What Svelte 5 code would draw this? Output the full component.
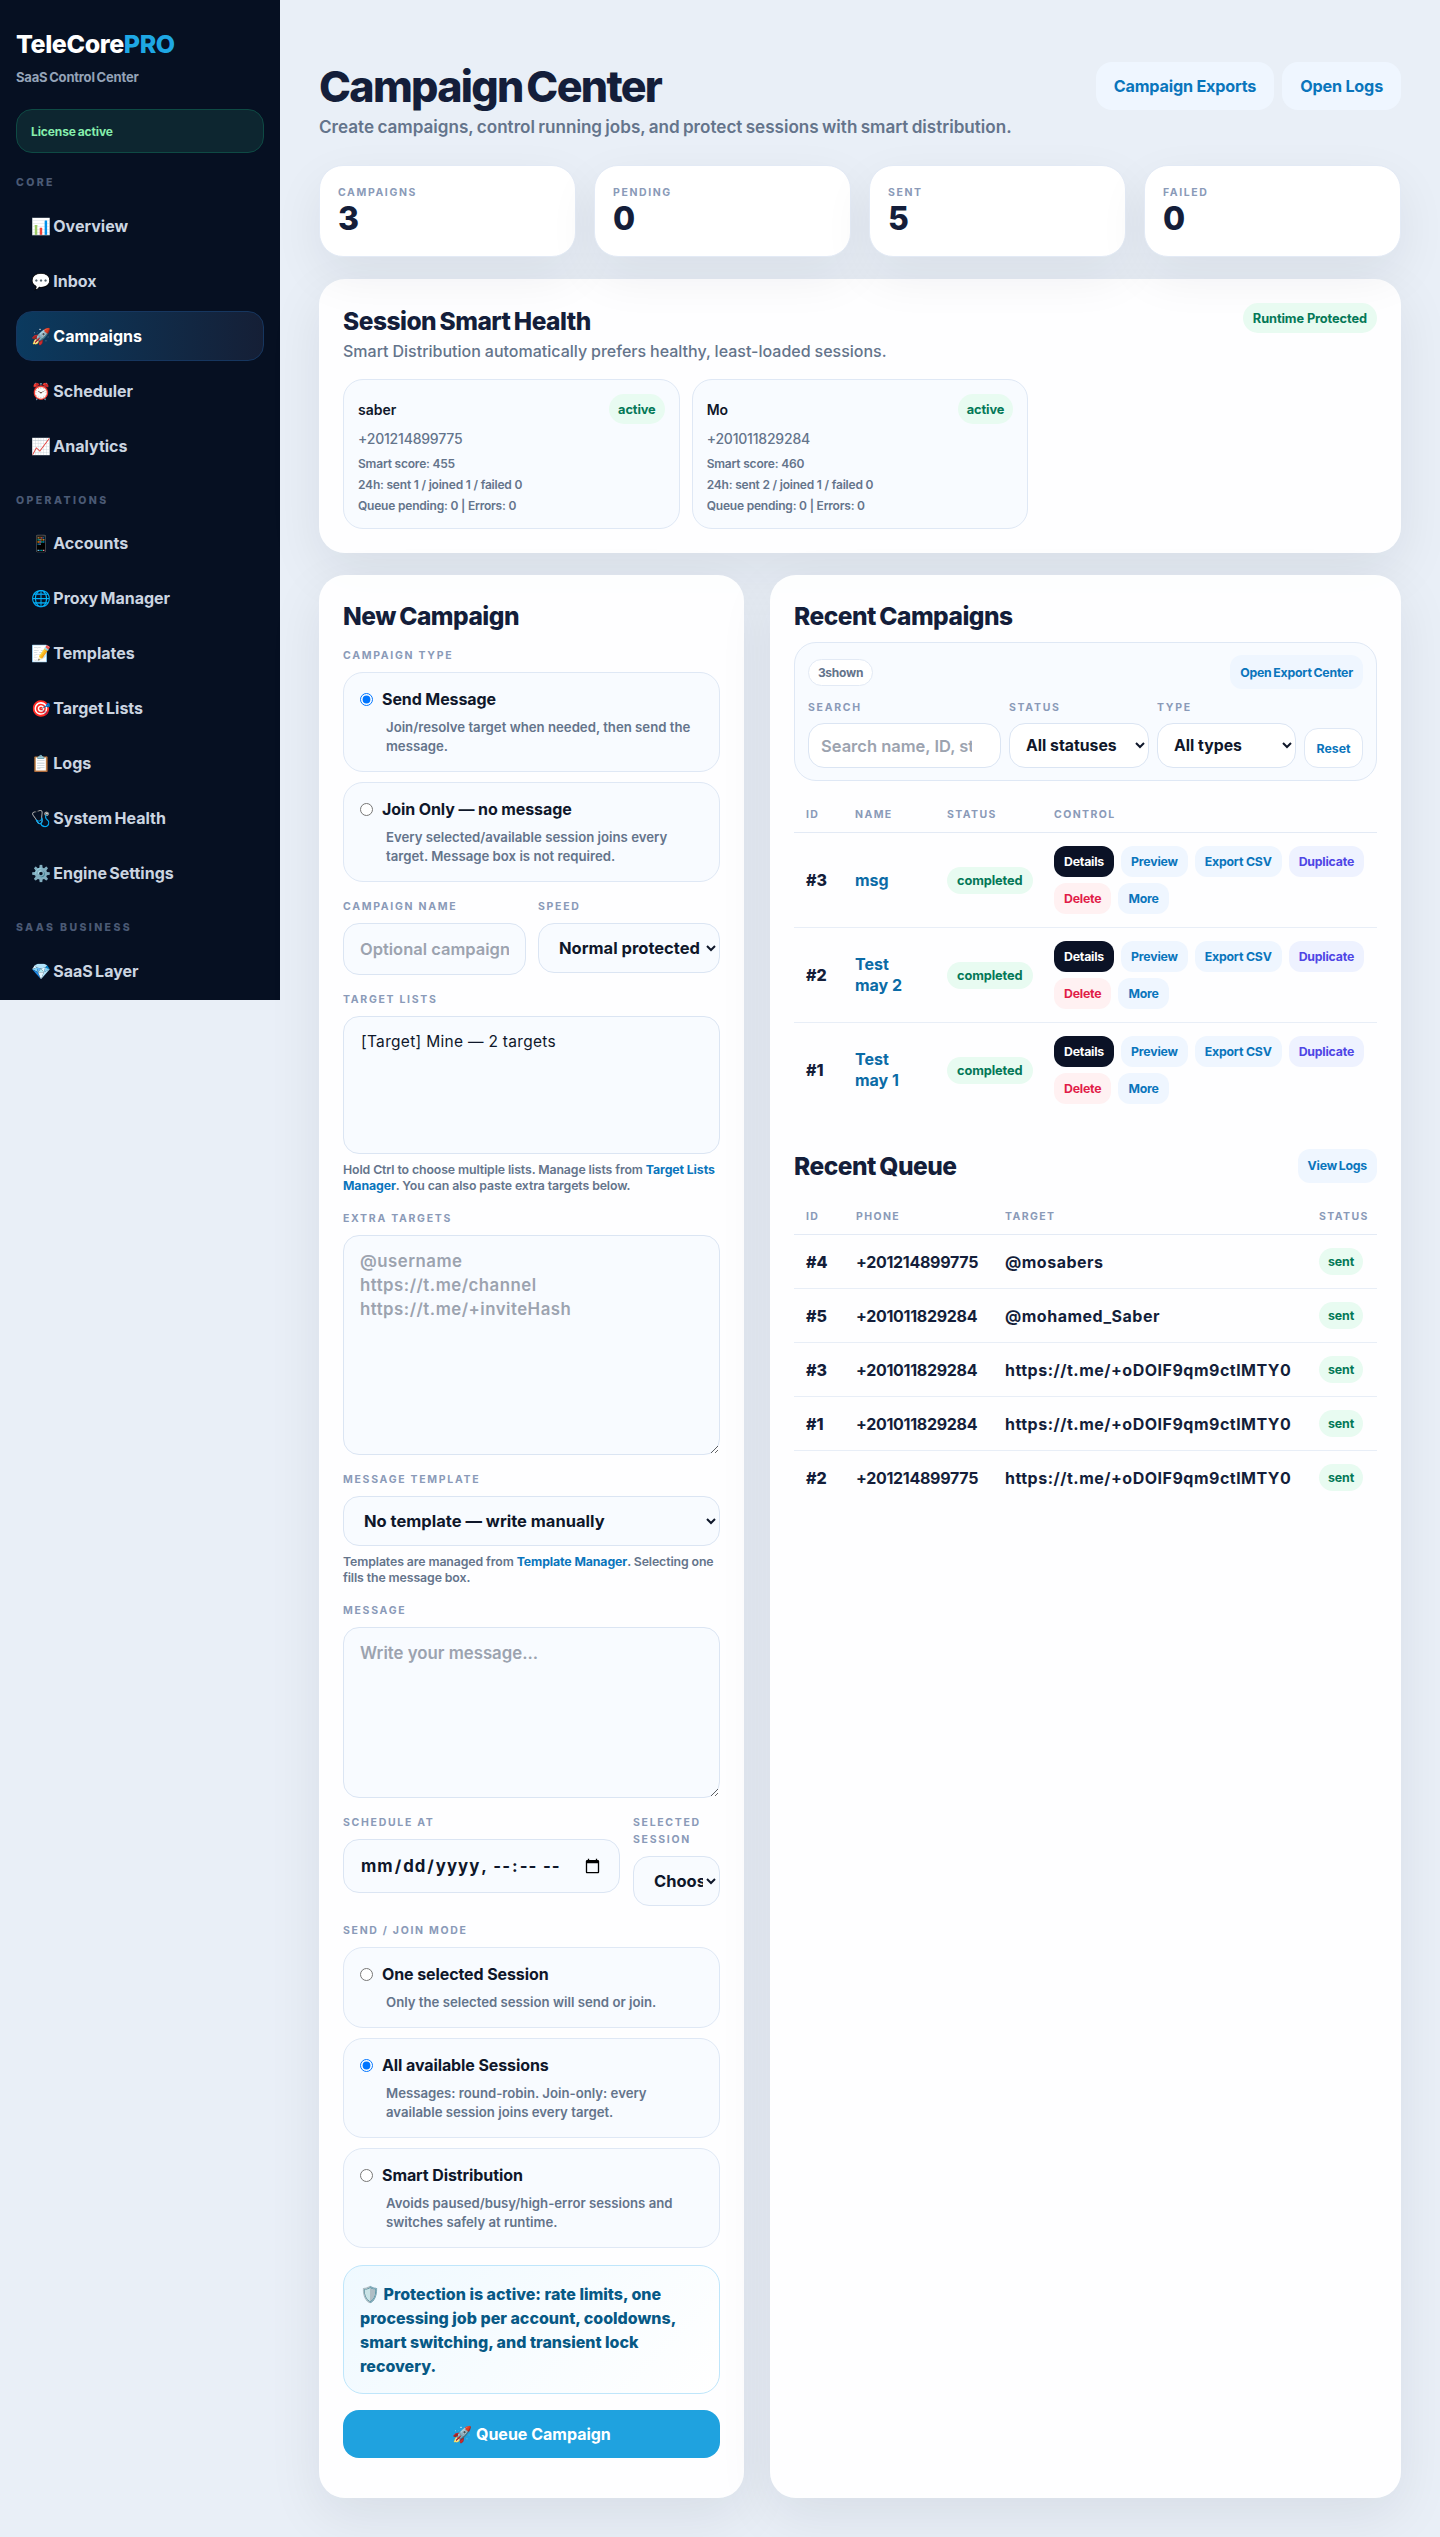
<script>
  const nav = [
    { title: 'Core', items: [
      { icon: '📊', label: 'Overview' },
      { icon: '💬', label: 'Inbox' },
      { icon: '🚀', label: 'Campaigns', active: true },
      { icon: '⏰', label: 'Scheduler' },
      { icon: '📈', label: 'Analytics' }
    ] },
    { title: 'Operations', items: [
      { icon: '📱', label: 'Accounts' },
      { icon: '🌐', label: 'Proxy Manager' },
      { icon: '📝', label: 'Templates' },
      { icon: '🎯', label: 'Target Lists' },
      { icon: '📋', label: 'Logs' },
      { icon: '🩺', label: 'System Health' },
      { icon: '⚙️', label: 'Engine Settings' }
    ] },
    { title: 'SaaS Business', items: [{ icon: '💎', label: 'SaaS Layer' }] }
  ];

  const stats = [
    { label: 'Campaigns', value: 3 },
    { label: 'Pending', value: 0 },
    { label: 'Sent', value: 5 },
    { label: 'Failed', value: 0 }
  ];

  const sessions = [
    { name: 'saber', phone: '+201214899775', score: 455, day: '24h: sent 1 / joined 1 / failed 0' },
    { name: 'Mo', phone: '+201011829284', score: 460, day: '24h: sent 2 / joined 1 / failed 0' }
  ];

  const campaigns = [
    { id: 3, name: 'msg' },
    { id: 2, name: 'Test may 2' },
    { id: 1, name: 'Test may 1' }
  ];

  const queue = [
    { id: 4, phone: '+201214899775', target: '@mosabers' },
    { id: 5, phone: '+201011829284', target: '@mohamed_Saber' },
    { id: 3, phone: '+201011829284', target: 'https://t.me/+oDOIF9qm9ctlMTY0' },
    { id: 1, phone: '+201011829284', target: 'https://t.me/+oDOIF9qm9ctlMTY0' },
    { id: 2, phone: '+201214899775', target: 'https://t.me/+oDOIF9qm9ctlMTY0' }
  ];

  const modes = [
    { title: 'One selected Session', desc: 'Only the selected session will send or join.' },
    { title: 'All available Sessions', desc: 'Messages: round-robin. Join-only: every available session joins every target.', checked: true },
    { title: 'Smart Distribution', desc: 'Avoids paused/busy/high-error sessions and switches safely at runtime.' }
  ];
</script>

<div class="shell">
  <aside class="sidebar">
    <div class="brand">TeleCore<span>PRO</span></div>
    <div class="brand-sub">SaaS Control Center</div>
    <div class="license">License active</div>
    {#each nav as group}
      <div class="nav-title">{group.title}</div>
      {#each group.items as item}
        <a class="nav-link" class:active={item.active} href="#top">{item.icon} {item.label}</a>
      {/each}
    {/each}
  </aside>

  <main class="main">
    <header class="top">
      <div>
        <h1>Campaign Center</h1>
        <p class="lead">Create campaigns, control running jobs, and protect sessions with smart distribution.</p>
      </div>
      <div class="top-actions">
        <button class="soft big">Campaign Exports</button>
        <button class="soft big">Open Logs</button>
      </div>
    </header>

    <section class="stats">
      {#each stats as s}
        <div class="stat">
          <div class="stat-label">{s.label}</div>
          <div class="stat-value">{s.value}</div>
        </div>
      {/each}
    </section>

    <section class="card health">
      <div class="health-head">
        <div>
          <h2>Session Smart Health</h2>
          <p class="health-sub">Smart Distribution automatically prefers healthy, least-loaded sessions.</p>
        </div>
        <span class="pill">Runtime Protected</span>
      </div>
      <div class="health-grid">
        {#each sessions as s}
          <div class="session">
            <div class="session-head">
              <strong>{s.name}</strong>
              <span class="pill">active</span>
            </div>
            <div class="session-phone">{s.phone}</div>
            <div class="session-line">Smart score: {s.score}</div>
            <div class="session-line">{s.day}</div>
            <div class="session-line">Queue pending: 0 | Errors: 0</div>
          </div>
        {/each}
      </div>
    </section>

    <div class="columns">
      <section class="card form">
        <h2>New Campaign</h2>

        <div class="field">
          <span class="label">Campaign type</span>
          <div class="options">
            <label class="option">
              <span class="option-title"><input type="radio" name="ctype" checked />Send Message</span>
              <span class="option-desc">Join/resolve target when needed, then send the message.</span>
            </label>
            <label class="option">
              <span class="option-title"><input type="radio" name="ctype" />Join Only — no message</span>
              <span class="option-desc">Every selected/available session joins every target. Message box is not required.</span>
            </label>
          </div>
        </div>

        <div class="row-name">
          <div class="field">
            <span class="label">Campaign name</span>
            <input class="control" type="text" placeholder="Optional campaign name" />
          </div>
          <div class="field">
            <span class="label">Speed</span>
            <select class="control"><option>Normal protected</option></select>
          </div>
        </div>

        <div class="field">
          <span class="label">Target lists</span>
          <select class="control lists" multiple><option>[Target] Mine — 2 targets</option></select>
          <p class="hint">Hold Ctrl to choose multiple lists. Manage lists from <a href="#top">Target Lists Manager</a>. You can also paste extra targets below.</p>
        </div>

        <div class="field">
          <span class="label">Extra targets</span>
          <textarea class="control extra" placeholder={'@username\nhttps://t.me/channel\nhttps://t.me/+inviteHash'}></textarea>
        </div>

        <div class="field">
          <span class="label">Message template</span>
          <select class="control"><option>No template — write manually</option></select>
          <p class="hint">Templates are managed from <a href="#top">Template Manager</a>. Selecting one fills the message box.</p>
        </div>

        <div class="field">
          <span class="label">Message</span>
          <textarea class="control message" placeholder="Write your message..."></textarea>
        </div>

        <div class="row-schedule">
          <div class="field">
            <span class="label">Schedule at</span>
            <input class="control date" type="datetime-local" />
          </div>
          <div class="field">
            <span class="label">Selected session</span>
            <select class="control"><option>Choose session</option></select>
          </div>
        </div>

        <div class="field">
          <span class="label">Send / Join mode</span>
          <div class="options">
            {#each modes as m}
              <label class="option">
                <span class="option-title"><input type="radio" name="mode" checked={m.checked} />{m.title}</span>
                <span class="option-desc">{m.desc}</span>
              </label>
            {/each}
          </div>
        </div>

        <div class="protect">🛡️ Protection is active: rate limits, one processing job per account, cooldowns, smart switching, and transient lock recovery.</div>
        <button class="queue-btn">🚀 Queue Campaign</button>
      </section>

      <section class="card recent">
        <h2>Recent Campaigns</h2>
        <div class="filters">
          <div class="filters-top">
            <span class="chip">3 shown</span>
            <button class="soft small">Open Export Center</button>
          </div>
          <div class="filters-grid">
            <div>
              <span class="label tight">Search</span>
              <input class="filter-control search" type="text" placeholder="Search name, ID, status" />
            </div>
            <div>
              <span class="label tight">Status</span>
              <select class="filter-control"><option>All statuses</option></select>
            </div>
            <div>
              <span class="label tight">Type</span>
              <select class="filter-control"><option>All types</option></select>
            </div>
            <button class="reset">Reset</button>
          </div>
        </div>

        <table class="campaigns">
          <colgroup><col class="c-id" /><col class="c-name" /><col class="c-status" /><col /></colgroup>
          <thead><tr><th>ID</th><th>Name</th><th>Status</th><th>Control</th></tr></thead>
          <tbody>
            {#each campaigns as c}
              <tr>
                <td class="id">#{c.id}</td>
                <td><a class="name" href="#top">{c.name}</a></td>
                <td><span class="pill">completed</span></td>
                <td>
                  <div class="actions">
                    <button class="act dark">Details</button>
                    <button class="act">Preview</button>
                    <button class="act">Export CSV</button>
                    <button class="act violet">Duplicate</button>
                    <button class="act danger">Delete</button>
                    <button class="act">More</button>
                  </div>
                </td>
              </tr>
            {/each}
          </tbody>
        </table>

        <div class="queue-head">
          <h2>Recent Queue</h2>
          <button class="soft small">View Logs</button>
        </div>

        <table class="queue">
          <colgroup><col class="q-id" /><col class="q-phone" /><col /><col class="q-status" /></colgroup>
          <thead><tr><th>ID</th><th>Phone</th><th>Target</th><th>Status</th></tr></thead>
          <tbody>
            {#each queue as q}
              <tr>
                <td class="id">#{q.id}</td>
                <td class="phone">{q.phone}</td>
                <td class="target">{q.target}</td>
                <td><span class="pill">sent</span></td>
              </tr>
            {/each}
          </tbody>
        </table>
      </section>
    </div>
  </main>
</div>

<style>
  :global(body) {
    margin: 0;
    background: #e9eff7;
    font-family: "Inter", "Noto Sans", sans-serif;
    color: #141e3a;
  }
  * { box-sizing: border-box; }
  button, input, select, textarea { font-family: inherit; }

  .shell { display: flex; align-items: flex-start; min-height: 2537px; }

  .sidebar {
    width: 280px;
    height: 1000px;
    flex-shrink: 0;
    background: #061022;
    padding: 28px 16px 0;
  }
  .brand { font-size: 25px; line-height: 32px; font-weight: 800; color: #fff; letter-spacing: -0.4px; }
  .brand span { color: #1ea7e4; }
  .brand-sub { margin-top: 9px; font-size: 13px; line-height: 16px; font-weight: 700; color: #94a3b8; letter-spacing: -0.2px; word-spacing: -1px; }
  .license {
    margin-top: 24px;
    height: 44px;
    padding: 0 14px;
    display: flex;
    align-items: center;
    background: #0d2630;
    border: 1px solid #0e4a44;
    border-radius: 16px;
    font-size: 12px;
    font-weight: 700;
    color: #86efac;
    letter-spacing: -0.1px;
    word-spacing: -1px;
  }
  .nav-title {
    margin: 23px 0 10.5px;
    font-size: 10.5px;
    line-height: 14px;
    font-weight: 800;
    letter-spacing: 2.4px;
    text-transform: uppercase;
    color: #4b5a75;
  }
  .nav-link {
    display: flex;
    align-items: center;
    height: 50px;
    margin-bottom: 5px;
    padding: 0 14px;
    border: 1px solid transparent;
    border-radius: 16px;
    font-size: 16px;
    font-weight: 700;
    color: #cbd5e1;
    text-decoration: none;
    white-space: pre;
    word-spacing: -1.5px;
  }
  .nav-link.active {
    color: #fff;
    background: linear-gradient(90deg, #0b3a5f, #151f36);
    border-color: #16365f;
  }

  .main { flex: 1; min-width: 0; padding: 62px 39px 39px; }

  .top { display: flex; justify-content: space-between; align-items: flex-start; }
  h1 { margin: 0; font-size: 43px; line-height: 48px; font-weight: 800; letter-spacing: -1.7px; word-spacing: -4px; color: #141e3a; }
  .lead { margin: 5px 0 0; font-size: 17.1px; line-height: 24px; font-weight: 600; color: #64748b; word-spacing: -1px; }
  .top-actions { display: flex; gap: 8px; }

  .soft {
    border: 0;
    background: #eff6ff;
    color: #0a75bc;
    font-weight: 700;
    cursor: pointer;
  }
  .soft.big { height: 48px; padding: 0 18px; border-radius: 16px; font-size: 16.2px; letter-spacing: -0.2px; }
  .soft.small { height: 34px; padding: 0 10px; border-radius: 12px; font-size: 12.3px; letter-spacing: -0.2px; word-spacing: -1px; }

  .stats { display: grid; grid-template-columns: repeat(4, 1fr); gap: 18px; margin-top: 26px; }
  .stat {
    height: 92px;
    padding: 20px 18px;
    background: #fff;
    border: 1px solid #e3eaf5;
    border-radius: 24px;
    box-shadow: 0 18px 50px rgba(15, 23, 42, 0.07);
  }
  .stat-label { font-size: 10.5px; line-height: 14px; font-weight: 700; letter-spacing: 1.6px; text-transform: uppercase; color: #8a9ab8; }
  .stat-value { font-size: 32px; line-height: 32px; font-weight: 800; color: #141e3a; margin-top: 3px; }

  .card {
    background: rgba(255, 255, 255, 0.93);
    border-radius: 26px;
    box-shadow: 0 18px 54px rgba(15, 23, 42, 0.08);
    padding: 24px;
  }
  h2 { margin: 0; font-size: 24.5px; line-height: 32px; font-weight: 800; letter-spacing: -0.5px; word-spacing: -1.5px; color: #141e3a; }
  .form > h2, .recent > h2 { margin: 1px 0 -1px; }

  .health { margin-top: 22px; height: 274px; }
  .health-head { display: flex; justify-content: space-between; align-items: flex-start; }
  .health-head h2 { margin-top: 2px; }
  .health-sub { margin: 2px 0 0; font-size: 16px; line-height: 24px; font-weight: 500; color: #64748b; word-spacing: -0.3px; }
  .health-grid { display: grid; grid-template-columns: repeat(3, 1fr); gap: 12px; margin-top: 16px; }
  .session {
    height: 150px;
    padding: 14px;
    background: #f8fbff;
    border: 1px solid #dfe8f5;
    border-radius: 20px;
  }
  .session-head { display: flex; justify-content: space-between; align-items: center; height: 30px; }
  .session-head strong { font-size: 14px; font-weight: 600; color: #0f172a; }
  .session-phone { margin-top: 3px; margin-bottom: 2px; font-size: 14px; line-height: 24px; font-weight: 500; color: #64748b; letter-spacing: -0.2px; }
  .session-line { font-size: 12px; line-height: 21px; font-weight: 600; color: #64748b; letter-spacing: -0.2px; }

  .pill {
    display: inline-flex;
    align-items: center;
    height: 27px;
    padding: 0 10px;
    border-radius: 14px;
    background: #e8fbf1;
    color: #047857;
    font-size: 12.8px;
    font-weight: 700;
    letter-spacing: -0.1px;
    white-space: nowrap;
  }
  .session-head .pill { height: 30px; border-radius: 15px; padding: 0 9px; }
  .health-head .pill { height: 30px; border-radius: 15px; }
  .queue .pill { padding: 0 9px; font-size: 12.4px; }

  .columns { display: grid; grid-template-columns: 425px 1fr; gap: 26px; margin-top: 22px; align-items: stretch; }

  .field { margin-top: 16px; min-width: 0; }
  .label {
    display: block;
    margin-bottom: 8px;
    font-size: 10.5px;
    line-height: 17px;
    font-weight: 700;
    letter-spacing: 1.7px;
    text-transform: uppercase;
    color: #8a9ab8;
  }
  .options { display: flex; flex-direction: column; gap: 10px; }
  .option {
    display: block;
    padding: 15px 16px;
    background: #f8fbff;
    border: 1px solid #dfe8f5;
    border-radius: 20px;
  }
  .option-title { display: flex; align-items: center; gap: 9px; font-size: 16px; line-height: 22px; font-weight: 700; color: #0f172a; letter-spacing: -0.1px; white-space: pre; }
  .option-title input { margin: 0; width: 13px; height: 13px; }
  .option-desc { display: block; margin-top: 8px; padding-left: 26px; font-size: 13.2px; line-height: 19px; font-weight: 600; color: #64748b; }

  .control {
    display: block;
    width: 100%;
    height: 50px;
    padding: 0 16px;
    background: #f8fbff;
    border: 1px solid #dbe5f3;
    border-radius: 16px;
    font-size: 16.5px;
    font-weight: 700;
    color: #0f172a;
    outline: none;
  }
  select.control { padding-right: 0; }
  input.control::placeholder, textarea.control::placeholder { color: #9ca3af; font-weight: 600; }
  .row-name { display: grid; grid-template-columns: 1fr 182px; gap: 12px; }
  .row-name input.control { height: 52px; }
  select.lists { height: 138px; padding: 15px 15px; font-size: 15.5px; font-weight: 400; letter-spacing: 0.3px; }
  .extra { height: 220px; padding: 13px 16px; line-height: 24px; font-size: 16.8px; letter-spacing: 0.5px; resize: vertical; }
  .message { height: 171px; padding: 13px 16px; line-height: 24px; font-size: 16.8px; resize: vertical; }
  .date { height: 54px; font-size: 16.8px; letter-spacing: 1px; }
  .row-schedule { display: grid; grid-template-columns: 277px 87px; gap: 13px; align-items: start; }

  .hint { margin: 8px 0 0; font-size: 12.3px; line-height: 16px; font-weight: 600; color: #64748b; letter-spacing: -0.1px; }
  .hint a { color: #0a75bc; font-weight: 700; text-decoration: none; }

  .protect {
    margin-top: 17px;
    padding: 15.5px 16px;
    background: linear-gradient(135deg, #eff9ff, #fff);
    border: 1px solid #bfe6fb;
    border-radius: 20px;
    font-size: 16px;
    line-height: 24px;
    font-weight: 800;
    color: #075985;
  }
  .queue-btn {
    display: block;
    width: 100%;
    height: 48px;
    margin: 16px 0;
    border: 0;
    border-radius: 16px;
    background: #1fa2df;
    color: #fff;
    font-size: 16px;
    font-weight: 700;
    cursor: pointer;
  }

  .filters {
    margin-top: 11px;
    height: 139px;
    padding: 12px 13px;
    background: #f8fbff;
    border: 1px solid #dfe8f5;
    border-radius: 22px;
  }
  .filters-top { display: flex; justify-content: space-between; align-items: center; height: 34px; }
  .chip {
    height: 27px;
    padding: 0 9px;
    display: inline-flex;
    align-items: center;
    background: #fff;
    border: 1px solid #e3eaf5;
    border-radius: 14px;
    font-size: 12px;
    font-weight: 700;
    color: #64748b;
    letter-spacing: -0.2px;
    word-spacing: -3px;
  }
  .filters-grid { display: grid; grid-template-columns: 193px 140px 139px 59px; gap: 8px; align-items: end; margin-top: 11px; }
  .label.tight { margin-bottom: 8px; line-height: 15px; }
  .filter-control {
    display: block;
    width: 100%;
    height: 45px;
    padding: 0 4px 0 12px;
    background: #fff;
    border: 1px solid #dbe5f3;
    border-radius: 16px;
    font-size: 15.8px;
    font-weight: 700;
    color: #0f172a;
    outline: none;
  }
  .filter-control.search { font-size: 16.5px; padding-right: 28px; }
  .filter-control::placeholder { color: #9ca3af; font-weight: 600; }
  .reset {
    height: 40px;
    padding: 0;
    background: #fff;
    border: 1px solid #dfe8f5;
    border-radius: 14px;
    color: #0a75bc;
    font-size: 12.3px;
    font-weight: 700;
    cursor: pointer;
  }

  table { width: 100%; border-collapse: collapse; table-layout: fixed; }
  .c-id { width: 49px; }
  .c-name { width: 92px; }
  .c-status { width: 107px; }
  .q-id { width: 50px; }
  .q-phone { width: 149px; }
  .q-status { width: 70px; }
  th {
    padding: 2px 12px 0;
    height: 38px;
    text-align: left;
    font-size: 10.5px;
    font-weight: 700;
    letter-spacing: 1.4px;
    text-transform: uppercase;
    color: #8a9ab8;
    border-bottom: 1px solid #e3eaf5;
    white-space: nowrap;
  }
  td { padding: 0 12px; border-bottom: 1px solid #e8eef7; font-size: 16px; font-weight: 700; color: #141e3a; }
  tbody tr:last-child td { border-bottom: 0; }
  .campaigns { margin-top: 13.5px; }
  .campaigns td { height: 95px; }
  .queue td { height: 54px; }
  .queue { margin-top: 14px; }
  .id { font-weight: 800; white-space: nowrap; }
  .phone { letter-spacing: -0.3px; }
  .target { letter-spacing: 0.5px; white-space: nowrap; }
  .name { color: #0b6ba6; text-decoration: none; display: block; line-height: 21px; max-width: 55px; }

  .actions { display: flex; flex-wrap: wrap; gap: 6px 7px; }
  .act {
    height: 31px;
    padding: 0 10px;
    border: 0;
    border-radius: 12px;
    background: #eff6ff;
    color: #0a75bc;
    font-size: 12.3px;
    font-weight: 700;
    letter-spacing: -0.2px;
    cursor: pointer;
    white-space: nowrap;
  }
  .act.dark { background: #0b1226; color: #fff; }
  .act.violet { background: #eef2ff; color: #4f46e5; }
  .act.danger { background: #fff1f2; color: #e11d48; }

  .queue-head { display: flex; justify-content: space-between; align-items: center; height: 34px; margin-top: 31px; }
</style>
